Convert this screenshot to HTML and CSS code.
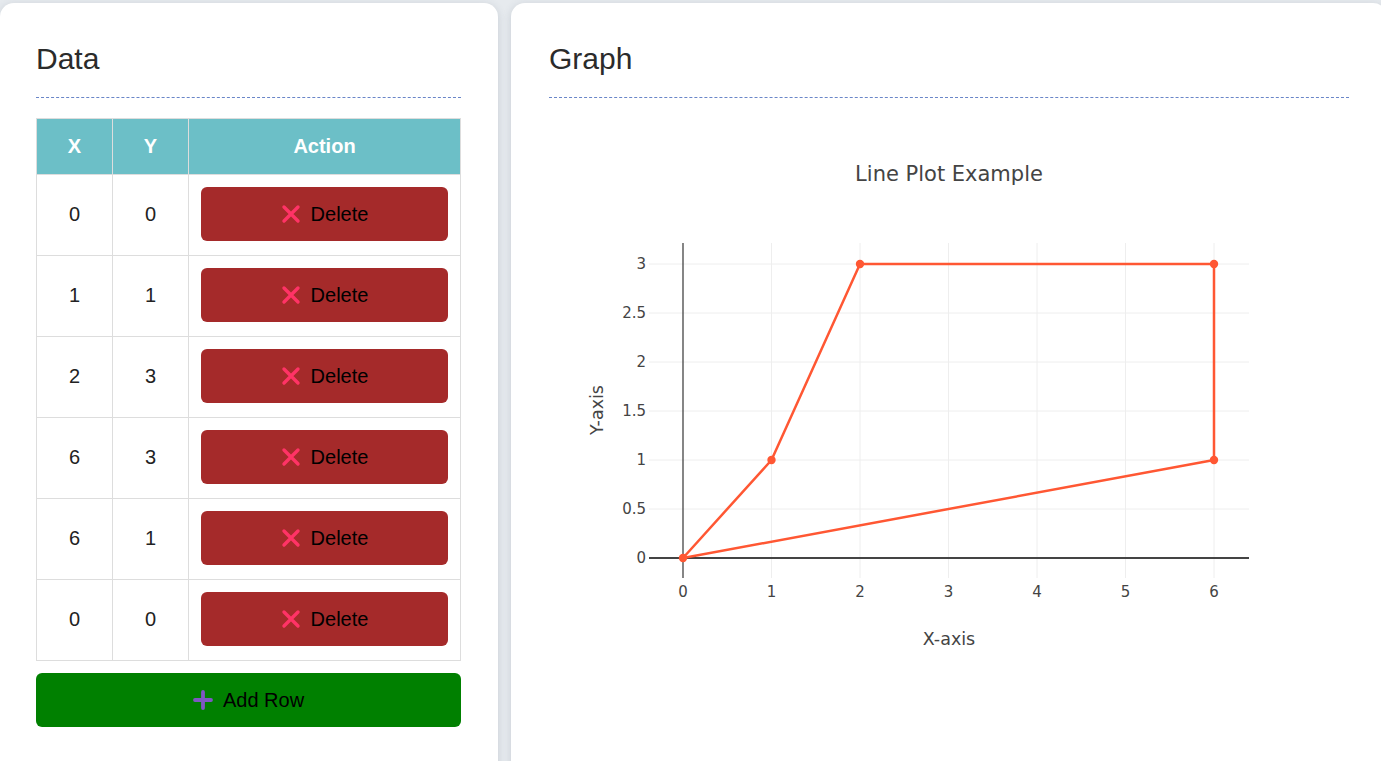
FILE: index.html
```html
<!DOCTYPE html>
<html lang="en">
<head>
<meta charset="utf-8">
<title>Data and Graph</title>
<link rel="stylesheet" href="styles.css">
</head>
<body>
<div class="page">
  <section class="card card-data">
    <h2 class="card-title">Data</h2>
    <table class="data-table">
      <thead>
        <tr><th class="col-x">X</th><th class="col-y">Y</th><th>Action</th></tr>
      </thead>
      <tbody>
        <tr><td>0</td><td>0</td><td class="act"><button class="btn btn-delete"><svg class="ico" viewBox="0 0 20 20"><path d="M3 3L17 17M17 3L3 17" stroke="#ff3366" stroke-width="3.4" stroke-linecap="round"/></svg>Delete</button></td></tr>
        <tr><td>1</td><td>1</td><td class="act"><button class="btn btn-delete"><svg class="ico" viewBox="0 0 20 20"><path d="M3 3L17 17M17 3L3 17" stroke="#ff3366" stroke-width="3.4" stroke-linecap="round"/></svg>Delete</button></td></tr>
        <tr><td>2</td><td>3</td><td class="act"><button class="btn btn-delete"><svg class="ico" viewBox="0 0 20 20"><path d="M3 3L17 17M17 3L3 17" stroke="#ff3366" stroke-width="3.4" stroke-linecap="round"/></svg>Delete</button></td></tr>
        <tr><td>6</td><td>3</td><td class="act"><button class="btn btn-delete"><svg class="ico" viewBox="0 0 20 20"><path d="M3 3L17 17M17 3L3 17" stroke="#ff3366" stroke-width="3.4" stroke-linecap="round"/></svg>Delete</button></td></tr>
        <tr><td>6</td><td>1</td><td class="act"><button class="btn btn-delete"><svg class="ico" viewBox="0 0 20 20"><path d="M3 3L17 17M17 3L3 17" stroke="#ff3366" stroke-width="3.4" stroke-linecap="round"/></svg>Delete</button></td></tr>
        <tr><td>0</td><td>0</td><td class="act"><button class="btn btn-delete"><svg class="ico" viewBox="0 0 20 20"><path d="M3 3L17 17M17 3L3 17" stroke="#ff3366" stroke-width="3.4" stroke-linecap="round"/></svg>Delete</button></td></tr>
      </tbody>
    </table>
    <button class="btn btn-add"><svg class="ico" viewBox="0 0 20 20"><path d="M10 2V18M2 10H18" stroke="#7e57c2" stroke-width="3.8" stroke-linecap="round"/></svg>Add Row</button>
  </section>

  <section class="card card-graph">
    <h2 class="card-title">Graph</h2>
    <svg class="chart" viewBox="0 0 800 560" width="800" height="560">
      <text class="ch-title" x="400" y="63" text-anchor="middle">Line Plot Example</text>
      <g stroke="#eeeeee" stroke-width="1">
        <line x1="222.5" y1="125" x2="222.5" y2="460"/>
        <line x1="311" y1="125" x2="311" y2="460"/>
        <line x1="399.5" y1="125" x2="399.5" y2="460"/>
        <line x1="488" y1="125" x2="488" y2="460"/>
        <line x1="576.5" y1="125" x2="576.5" y2="460"/>
        <line x1="665" y1="125" x2="665" y2="460"/>
        <line x1="100" y1="391" x2="700" y2="391"/>
        <line x1="100" y1="342" x2="700" y2="342"/>
        <line x1="100" y1="293" x2="700" y2="293"/>
        <line x1="100" y1="244" x2="700" y2="244"/>
        <line x1="100" y1="195" x2="700" y2="195"/>
        <line x1="100" y1="146" x2="700" y2="146"/>
      </g>
      <line x1="134" y1="125" x2="134" y2="460" stroke="#444" stroke-width="1.3"/>
      <line x1="100" y1="440" x2="700" y2="440" stroke="#444" stroke-width="2"/>
      <polyline points="134,440 222.5,342 311,146 665,146 665,342 134,440" fill="none" stroke="#ff5733" stroke-width="2.5" stroke-linejoin="round"/>
      <g fill="#ff5733">
        <circle cx="134" cy="440" r="4.2"/>
        <circle cx="222.5" cy="342" r="4.2"/>
        <circle cx="311" cy="146" r="4.2"/>
        <circle cx="665" cy="146" r="4.2"/>
        <circle cx="665" cy="342" r="4.2"/>
      </g>
      <g class="tick" text-anchor="end">
        <text x="97" y="445">0</text>
        <text x="97" y="396">0.5</text>
        <text x="97" y="347">1</text>
        <text x="97" y="298">1.5</text>
        <text x="97" y="249">2</text>
        <text x="97" y="200">2.5</text>
        <text x="97" y="151">3</text>
      </g>
      <g class="tick" text-anchor="middle">
        <text x="134" y="479">0</text>
        <text x="222.5" y="479">1</text>
        <text x="311" y="479">2</text>
        <text x="399.5" y="479">3</text>
        <text x="488" y="479">4</text>
        <text x="576.5" y="479">5</text>
        <text x="665" y="479">6</text>
      </g>
      <text class="ax-title" x="400" y="527" text-anchor="middle">X-axis</text>
      <text class="ax-title" transform="translate(54 292) rotate(-90)" text-anchor="middle">Y-axis</text>
    </svg>
  </section>
</div>
</body>
</html>
```

FILE: styles.css
```css
html, body {
  margin: 0;
  padding: 0;
  overflow: hidden;
}
body {
  background: #e6eaee;
  font-family: "Liberation Sans", Arial, sans-serif;
  color: #222;
}
.page {
  display: flex;
  gap: 13px;
  padding-top: 3px;
  width: 1400px;
  height: 758px;
  align-items: flex-start;
  overflow: hidden;
}
.card {
  background: #ffffff;
  border-radius: 14px;
  box-shadow: 0 2px 8px rgba(60, 80, 100, 0.18);
  padding: 38px 37px 0 36px;
  box-sizing: border-box;
  height: 780px;
}
.card-data {
  width: 498px;
  flex: none;
}
.card-graph {
  width: 876px;
  flex: none;
  padding-left: 38px;
  padding-right: 38px;
}
.card-title {
  margin: 0 0 20px 0;
  font-size: 30px;
  line-height: 35px;
  font-weight: normal;
  color: #2b2b2b;
  padding-bottom: 21px;
  border-bottom: 1px dashed #6a86c8;
}
.data-table {
  width: 425px;
  border-collapse: collapse;
  font-size: 20px;
  color: #222;
}
.data-table th {
  background: #6cbfc7;
  color: #ffffff;
  font-weight: bold;
  height: 56px;
  padding: 0;
  border: 1px solid #dddddd;
  text-align: center;
  box-sizing: border-box;
}
.data-table .col-x, .data-table .col-y {
  width: 76px;
}
.data-table td {
  border: 1px solid #dddddd;
  text-align: center;
  padding: 12px 12px 14px 12px;
  height: 54px;
}
.btn {
  display: flex;
  align-items: center;
  justify-content: center;
  gap: 10px;
  border: none;
  border-radius: 6px;
  font-family: "Liberation Sans", Arial, sans-serif;
  font-size: 20px;
  color: #000;
  height: 54px;
  width: 100%;
  padding: 0;
  cursor: pointer;
}
.btn-delete {
  background: #a52a2a;
}
.btn-add {
  background: #008000;
  margin-top: 12px;
  width: 425px;
}
.ico {
  width: 20px;
  height: 20px;
  flex: none;
}
.chart {
  display: block;
  font-family: "DejaVu Sans", Verdana, sans-serif;
}
.ch-title {
  font-size: 21px;
  fill: #444;
}
.tick text {
  font-size: 15px;
  fill: #444;
}
.ax-title {
  font-size: 17.5px;
  fill: #444;
}
```
